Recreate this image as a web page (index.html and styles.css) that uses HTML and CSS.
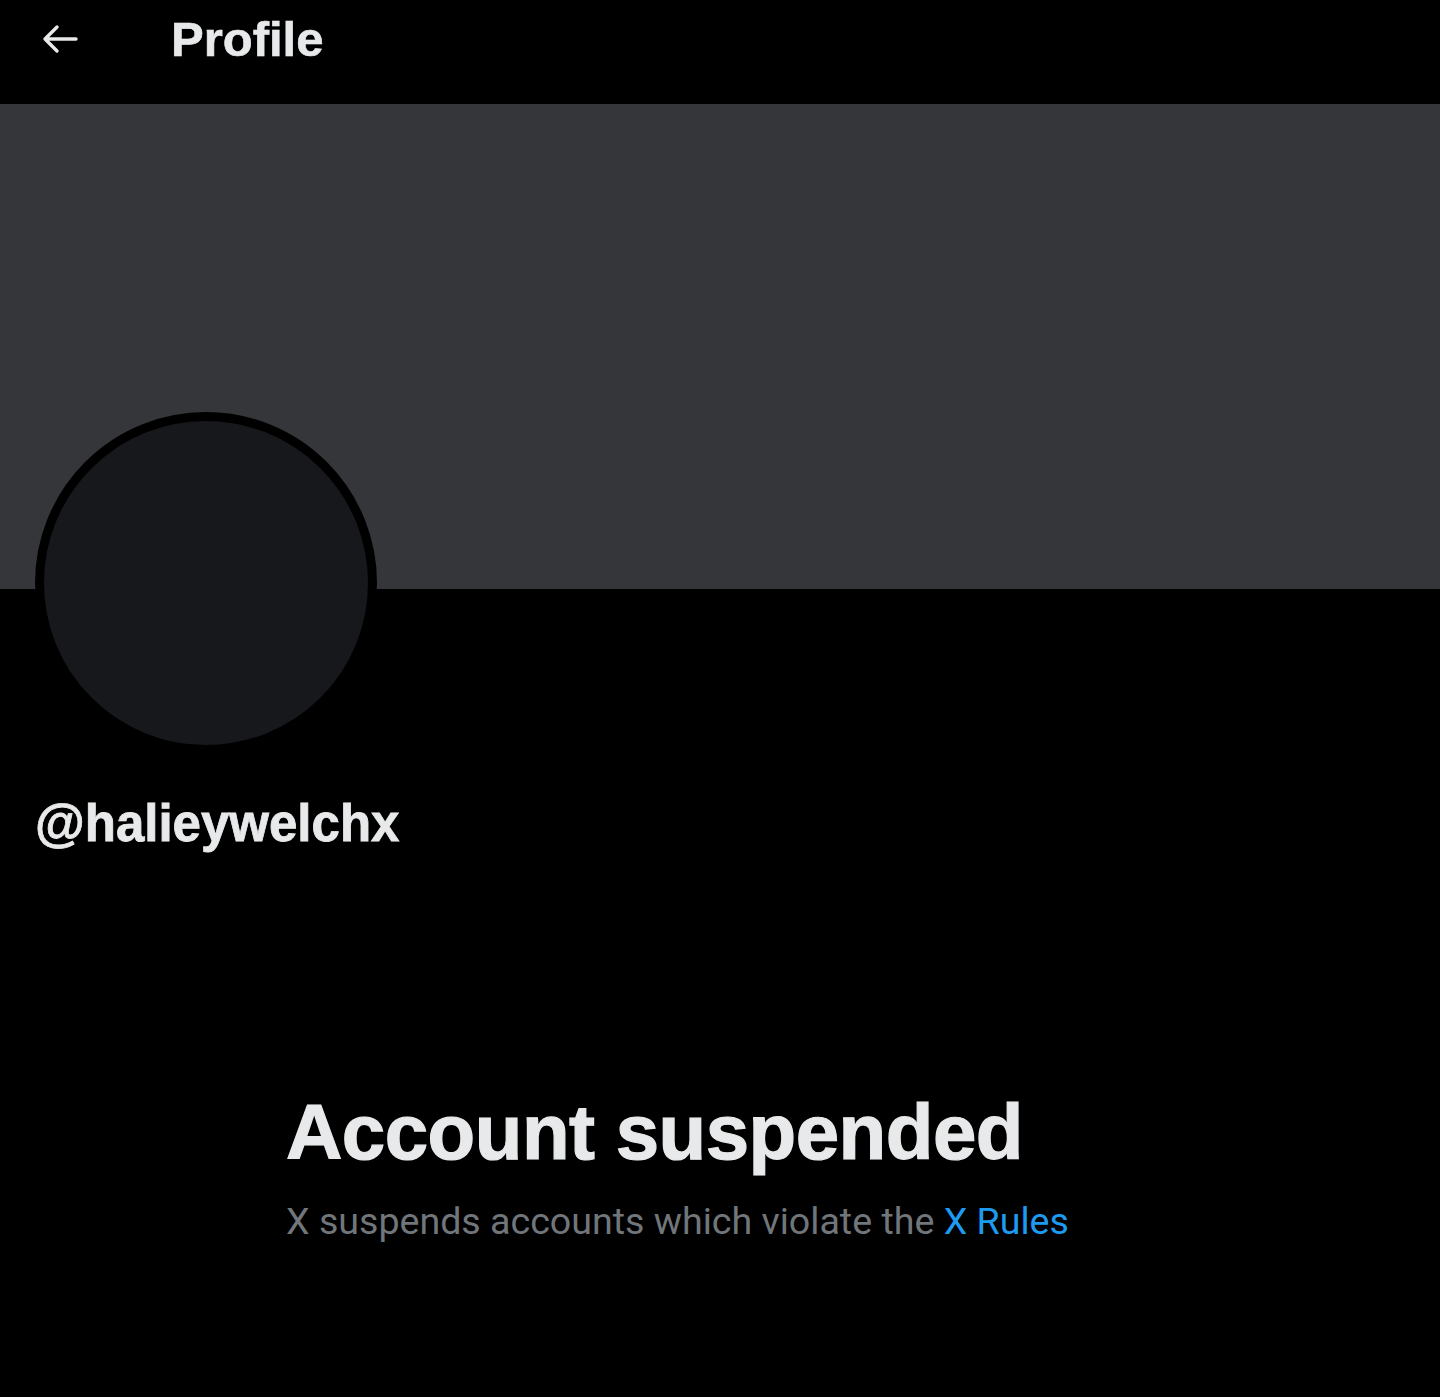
FILE: index.html
```html
<!DOCTYPE html>
<html lang="en">
<head>
<meta charset="utf-8">
<title>Profile</title>
<link rel="stylesheet" href="styles.css">
</head>
<body>
<div class="page">
  <header class="topbar">
    <button class="back" aria-label="Back">
      <svg viewBox="0 0 36 30" width="36" height="30" aria-hidden="true">
        <path d="M34 15H3M15 3L3 15l12 12" fill="none" stroke="#e7e9ea" stroke-width="3.4" stroke-linecap="round" stroke-linejoin="round"/>
      </svg>
    </button>
    <h1 class="title">Profile</h1>
  </header>
  <div class="banner"></div>
  <section class="profile">
    <div class="avatar"></div>
    <div class="handle">@halieywelchx</div>
  </section>
  <section class="notice">
    <h2 class="notice-title">Account suspended</h2>
    <p class="notice-text">X suspends accounts which violate the <a class="link" href="#">X Rules</a></p>
  </section>
</div>
</body>
</html>
```
FILE: styles.css
```css
html, body {
  margin: 0;
  padding: 0;
  background: #000;
}
.page {
  width: 1440px;
  min-height: 1397px;
  background: #000;
  color: #e7e9ea;
  font-family: "Liberation Sans", Arial, sans-serif;
}
.topbar {
  height: 104px;
  display: flex;
  align-items: center;
  padding-left: 42px;
  box-sizing: border-box;
}
.back {
  background: none;
  border: 0;
  padding: 0;
  width: 36px;
  height: 30px;
  display: flex;
  margin-top: -26px;
}
.back svg { display: block; }
.title {
  margin: 0 0 0 93px;
  font-size: 49px;
  font-weight: 700;
  line-height: 1;
  margin-top: -26px;
  color: #e7e9ea;
  -webkit-text-stroke: 0.6px #e7e9ea;
}
.banner {
  height: 485px;
  background: #343639;
}
.profile {
  padding-left: 35px;
}
.avatar {
  width: 342px;
  height: 342px;
  box-sizing: border-box;
  border-radius: 50%;
  border: 9px solid #000;
  background: #17181c;
  margin-top: -177px;
}
.handle {
  margin-top: 44px;
  font-size: 51px;
  font-weight: 700;
  line-height: 1;
  color: #e7e9ea;
  -webkit-text-stroke: 0.8px #e7e9ea;
}
.notice {
  padding-left: 286px;
  padding-top: 244px;
}
.notice-title {
  margin: 0;
  font-size: 78px;
  font-weight: 700;
  line-height: 1;
  letter-spacing: -0.5px;
  color: #e7e9ea;
  -webkit-text-stroke: 1.2px #e7e9ea;
}
.notice-text {
  margin: 32px 0 0;
  font-family: Roboto, "Liberation Sans", sans-serif;
  font-size: 37.6px;
  line-height: 1;
  color: #71767b;
}
.link {
  color: #1d9bf0;
  text-decoration: none;
}
```
